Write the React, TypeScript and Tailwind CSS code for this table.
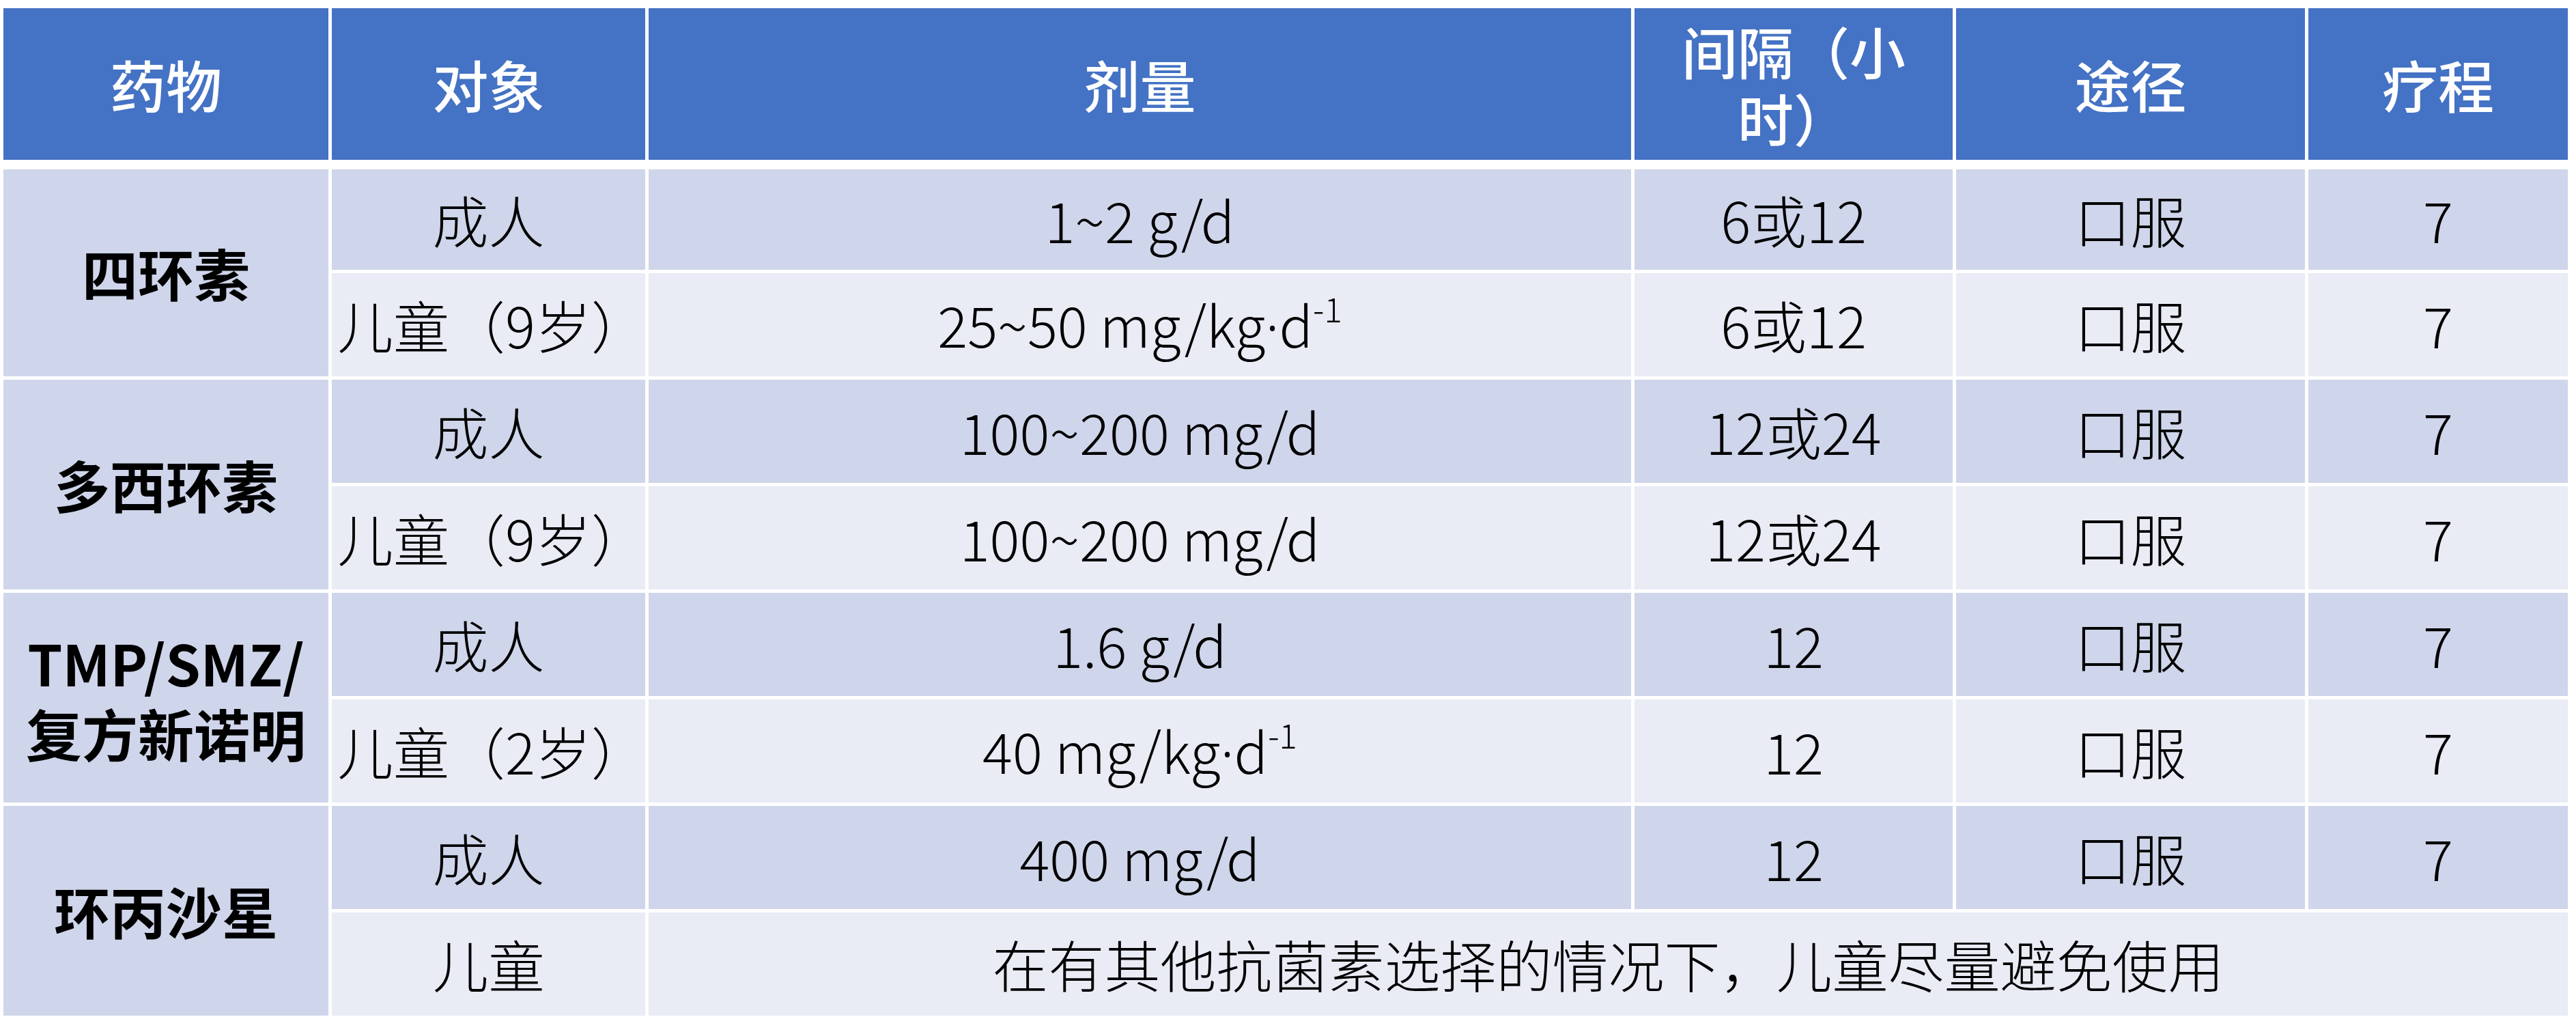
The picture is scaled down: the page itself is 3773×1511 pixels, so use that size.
const FONT = "font-['Noto_Sans_CJK_SC','Noto_Sans',sans-serif]"

const headers = ['药物', '对象', '剂量', '间隔（小时）', '途径', '疗程']

interface Row {
  who: string
  dose: React.ReactNode
  interval: string
  route: string
  days: string
}

interface Drug {
  name: React.ReactNode
  rows: Row[]
}

// mg/kg·d⁻¹ with a narrow latin middle dot
const perKg = (a: string) => (
  <>
    {a} mg/kg<span className="font-['Noto_Sans',sans-serif]">·</span>d
    <sup className="text-[0.6em] top-[-0.75em]">-1</sup>
  </>
)

const drugs: Drug[] = [
  {
    name: '四环素',
    rows: [
      { who: '成人', dose: '1~2 g/d', interval: '6或12', route: '口服', days: '7' },
      { who: '儿童（9岁）', dose: perKg('25~50'), interval: '6或12', route: '口服', days: '7' },
    ],
  },
  {
    name: '多西环素',
    rows: [
      { who: '成人', dose: '100~200 mg/d', interval: '12或24', route: '口服', days: '7' },
      { who: '儿童（9岁）', dose: '100~200 mg/d', interval: '12或24', route: '口服', days: '7' },
    ],
  },
  {
    name: (
      <>
        TMP/SMZ/
        <br />
        复方新诺明
      </>
    ),
    rows: [
      { who: '成人', dose: '1.6 g/d', interval: '12', route: '口服', days: '7' },
      { who: '儿童（2岁）', dose: perKg('40'), interval: '12', route: '口服', days: '7' },
    ],
  },
]

function Cell({ children, light, className = '' }: { children?: React.ReactNode; light?: boolean; className?: string }) {
  return (
    <div
      className={`flex items-center justify-center text-center text-black px-2 ${
        light ? 'bg-[#E9EBF5]' : 'bg-[#CFD5EA]'
      } ${className}`}
    >
      <span>{children}</span>
    </div>
  )
}

export default function App() {
  return (
    <div className={`w-[3773px] h-[1511px] bg-white pt-[12px] pl-[5px] ${FONT} text-[82px] leading-[1.2]`}>
      {/* header */}
      <div className="grid grid-cols-[476px_459px_1439px_466px_511px_380px] gap-x-[5px] h-[222px]">
        {headers.map(h => (
          <div key={h} className="bg-[#4472C4] text-white font-medium flex items-center justify-center text-center px-[20px]">
            <span>{h}</span>
          </div>
        ))}
      </div>

      {/* body */}
      <div className="mt-[14px] grid grid-cols-[476px_459px_1439px_466px_511px_380px] grid-rows-[147px_repeat(7,151px)] gap-x-[5px] gap-y-[5px] font-light">
        {drugs.map((d, i) => (
          <div key={i} className="contents">
            <Cell className="row-span-2 font-bold leading-[1.25]">{d.name}</Cell>
            {d.rows.map((r, j) => (
              <div key={j} className="contents">
                <Cell light={j === 1} className={j === 1 ? 'col-start-2' : ''}>{r.who}</Cell>
                <Cell light={j === 1}>{r.dose}</Cell>
                <Cell light={j === 1}>{r.interval}</Cell>
                <Cell light={j === 1}>{r.route}</Cell>
                <Cell light={j === 1}>{r.days}</Cell>
              </div>
            ))}
          </div>
        ))}

        {/* 环丙沙星 */}
        <Cell className="row-span-2 font-bold">环丙沙星</Cell>
        <Cell>成人</Cell>
        <Cell>400 mg/d</Cell>
        <Cell>12</Cell>
        <Cell>口服</Cell>
        <Cell>7</Cell>
        <Cell light className="col-start-2">儿童</Cell>
        <Cell light className="col-span-4">在有其他抗菌素选择的情况下，儿童尽量避免使用</Cell>
      </div>
    </div>
  )
}
